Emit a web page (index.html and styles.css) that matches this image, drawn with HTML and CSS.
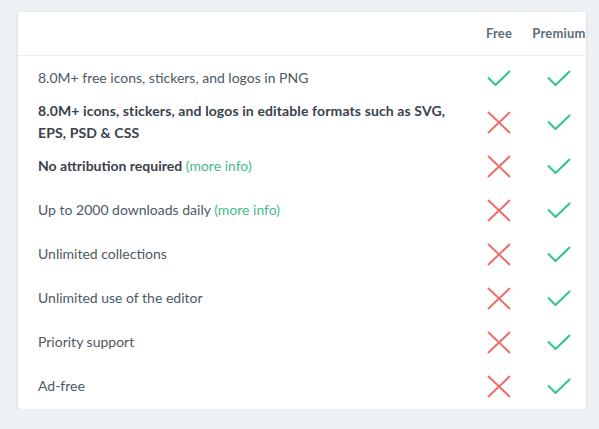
FILE: index.html
```html
<!DOCTYPE html>
<html>
<head>
<meta charset="utf-8">
<link rel="stylesheet" href="styles.css">
</head>
<body>
<div class="card">
  <div class="row head">
    <div class="feat"></div>
    <div class="col">Free</div>
    <div class="col">Premium</div>
  </div>
  <div class="row">
    <div class="feat">8.0M+ free icons, stickers, and logos in PNG</div>
    <div class="col"><svg class="ok" viewBox="0 0 24 16"><path d="M1 7.5 L8.5 15 L23 1"/></svg></div>
    <div class="col"><svg class="ok" viewBox="0 0 24 16"><path d="M1 7.5 L8.5 15 L23 1"/></svg></div>
  </div>
  <div class="row">
    <div class="feat b wide">8.0M+ icons, stickers, and logos in editable formats such as SVG, EPS, PSD &amp; CSS</div>
    <div class="col"><svg class="no" viewBox="0 0 24 23"><path d="M1 1 L23 22 M23 1 L1 22"/></svg></div>
    <div class="col"><svg class="ok" viewBox="0 0 24 16"><path d="M1 7.5 L8.5 15 L23 1"/></svg></div>
  </div>
  <div class="row">
    <div class="feat"><span class="b">No attribution required</span> <a class="more">(more info)</a></div>
    <div class="col"><svg class="no" viewBox="0 0 24 23"><path d="M1 1 L23 22 M23 1 L1 22"/></svg></div>
    <div class="col"><svg class="ok" viewBox="0 0 24 16"><path d="M1 7.5 L8.5 15 L23 1"/></svg></div>
  </div>
  <div class="row">
    <div class="feat">Up to 2000 downloads daily <a class="more">(more info)</a></div>
    <div class="col"><svg class="no" viewBox="0 0 24 23"><path d="M1 1 L23 22 M23 1 L1 22"/></svg></div>
    <div class="col"><svg class="ok" viewBox="0 0 24 16"><path d="M1 7.5 L8.5 15 L23 1"/></svg></div>
  </div>
  <div class="row">
    <div class="feat">Unlimited collections</div>
    <div class="col"><svg class="no" viewBox="0 0 24 23"><path d="M1 1 L23 22 M23 1 L1 22"/></svg></div>
    <div class="col"><svg class="ok" viewBox="0 0 24 16"><path d="M1 7.5 L8.5 15 L23 1"/></svg></div>
  </div>
  <div class="row">
    <div class="feat">Unlimited use of the editor</div>
    <div class="col"><svg class="no" viewBox="0 0 24 23"><path d="M1 1 L23 22 M23 1 L1 22"/></svg></div>
    <div class="col"><svg class="ok" viewBox="0 0 24 16"><path d="M1 7.5 L8.5 15 L23 1"/></svg></div>
  </div>
  <div class="row">
    <div class="feat">Priority support</div>
    <div class="col"><svg class="no" viewBox="0 0 24 23"><path d="M1 1 L23 22 M23 1 L1 22"/></svg></div>
    <div class="col"><svg class="ok" viewBox="0 0 24 16"><path d="M1 7.5 L8.5 15 L23 1"/></svg></div>
  </div>
  <div class="row">
    <div class="feat">Ad-free</div>
    <div class="col"><svg class="no" viewBox="0 0 24 23"><path d="M1 1 L23 22 M23 1 L1 22"/></svg></div>
    <div class="col"><svg class="ok" viewBox="0 0 24 16"><path d="M1 7.5 L8.5 15 L23 1"/></svg></div>
  </div>
</div>
</body>
</html>
```
FILE: styles.css
```css
html, body {
  margin: 0;
  padding: 0;
  background: #eef1f4;
}
body {
  padding: 12px 0 0 18px;
  font-family: Lato, "Open Sans", sans-serif;
  font-size: 14px;
  color: #4f5963;
}
.card {
  width: 568px;
  height: 397px;
  background: #fff;
  border-radius: 3px;
  box-shadow: 0 1px 3px rgba(40, 60, 80, 0.18);
  box-sizing: border-box;
}
.row {
  display: grid;
  grid-template-columns: 1fr 60px 57px;
  align-items: center;
  height: 44px;
  padding-left: 20px;
}
.row.head {
  height: 43px;
  border-bottom: 1px solid #e9edf0;
  font-size: 13px;
  font-weight: 700;
  color: #5d6d7c;
  padding-bottom: 2px;
  box-sizing: border-box;
  height: 44px;
}
.head .col {
  width: 60px;
  text-align: center;
  white-space: nowrap;
  letter-spacing: 0.2px;
}
.feat {
  line-height: 22px;
  padding-right: 20px;
}
.b {
  font-weight: 700;
  color: #3a424b;
}
.wide {
  letter-spacing: 0.12px;
}
.more {
  color: #42bd88;
}
.col {
  width: 60px;
  display: flex;
  justify-content: center;
  align-items: center;
}
svg {
  display: block;
  fill: none;
  stroke-width: 2;
}
.ok {
  width: 24px;
  height: 16px;
  stroke: #2fc58a;
}
.no {
  width: 24px;
  height: 23px;
  stroke: #e8716d;
}
```
